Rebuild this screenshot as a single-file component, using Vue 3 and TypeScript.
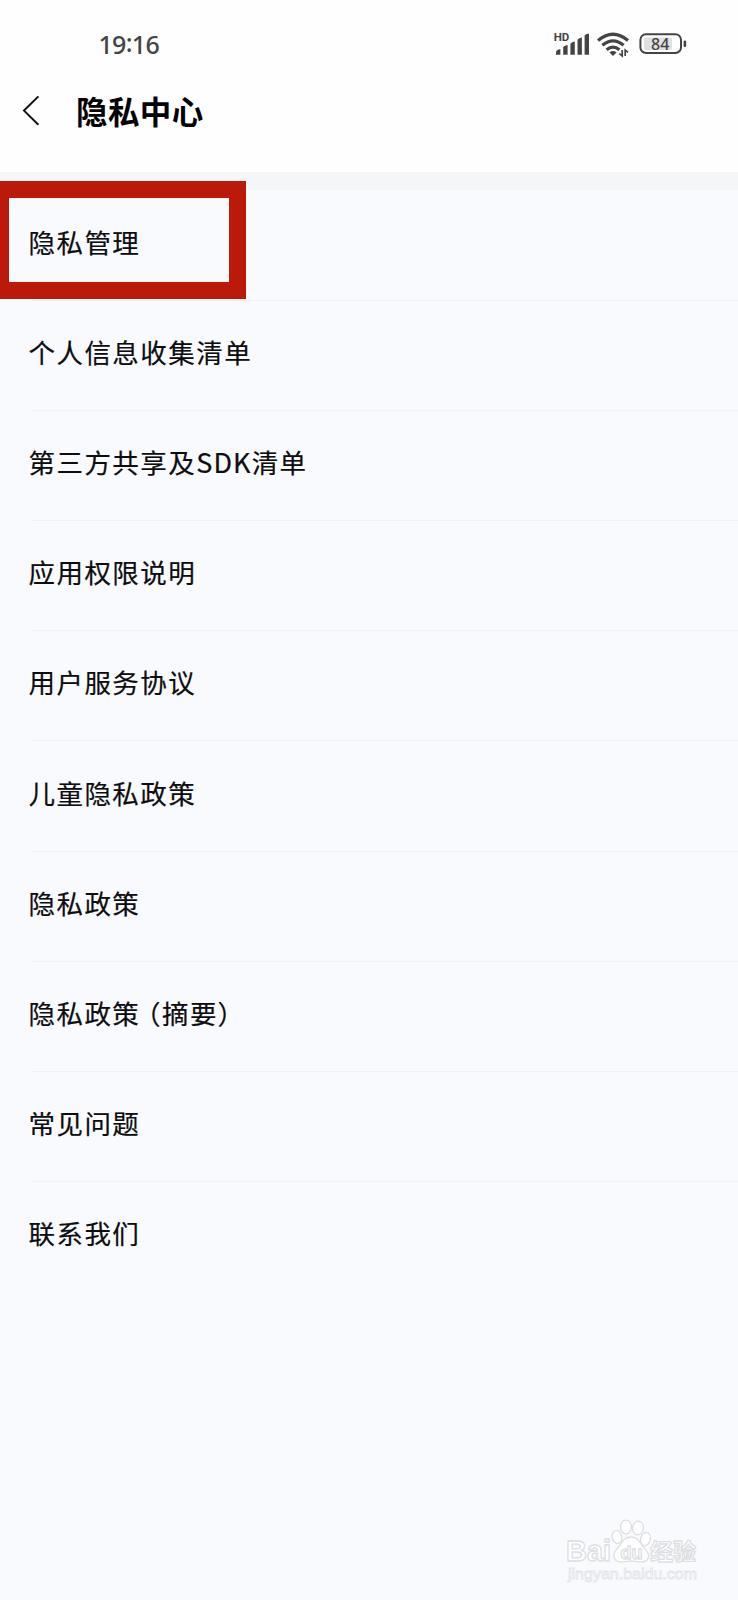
<script setup lang="ts">
interface Piece {
  text: string
  kind?: 'latin' | 'open' | 'close'
}

const rows: Piece[][] = [
  [{ text: '隐私管理' }],
  [{ text: '个人信息收集清单' }],
  [{ text: '第三方共享及' }, { text: 'SDK', kind: 'latin' }, { text: '清单' }],
  [{ text: '应用权限说明' }],
  [{ text: '用户服务协议' }],
  [{ text: '儿童隐私政策' }],
  [{ text: '隐私政策' }],
  [{ text: '隐私政策' }, { text: '（', kind: 'open' }, { text: '摘要' }, { text: '）', kind: 'close' }],
  [{ text: '常见问题' }],
  [{ text: '联系我们' }],
]
</script>

<template>
  <div class="screen">
    <header class="top">
      <div class="status">
        <span class="clock">19<span class="colon">:</span>16</span>
        <svg class="indicators" width="140" height="32" viewBox="0 0 140 32">
          <text x="-0.3" y="13.4" class="hd">HD</text>
          <g fill="#444">
            <path d="M2 26.8V24.5Q2 21.5 6.4 21V26.8Z" />
            <path d="M9.2 26.8V19.5Q9.2 18 13.6 17V26.8Z" />
            <path d="M16.4 26.8V16Q16.4 14.5 20.8 13.4V26.8Z" />
            <path d="M23.5 26.8V12Q23.5 10.5 27.9 9.4V26.8Z" />
            <path d="M30.6 26.8V8Q30.6 6 35 5.4V26.8Z" />
          </g>
          <g fill="none" stroke="#444" stroke-width="3.3">
            <path d="M44 12.5Q59 0 74 12.5" />
            <path d="M48.4 17.3Q59 8.4 69.6 17.3" />
            <path d="M52.6 21.8Q59 16.4 65.4 21.8" />
          </g>
          <path d="M55.4 24.4Q59 21.6 62.6 24.4L59 28Z" fill="#444" />
          <path d="M68.2 22V28L65.4 25.6M71.2 28V22L74 24.4" fill="none" stroke="#444" stroke-width="1.7" />
          <rect x="86.4" y="6.3" width="40.6" height="18.6" rx="5.5" fill="none" stroke="#444" stroke-width="2" />
          <rect x="90" y="9.6" width="28" height="12.4" rx="2" fill="#e0e0e0" />
          <rect x="129.6" y="12.4" width="2.6" height="6.6" rx="1.2" fill="#444" />
          <text x="106.2" y="21.8" text-anchor="middle" class="level">84</text>
        </svg>
      </div>
      <div class="bar">
        <svg class="back" width="20" height="34" viewBox="0 0 20 34">
          <path d="M17.4 2.4L3 16.6L17.4 30.8" fill="none" stroke="#111" stroke-width="2" />
        </svg>
        <h1>隐私中心</h1>
      </div>
    </header>
    <div class="gap"></div>
    <main class="list">
      <div v-for="(row, i) in rows" :key="i" class="row">
        <span class="label"><span v-for="(p, j) in row" :key="j" :class="p.kind">{{ p.text }}</span></span>
      </div>
    </main>
    <div class="highlight"></div>
    <svg class="mark" width="140" height="70" viewBox="0 0 140 70">
      <g fill="#fff" stroke="#dedfe3" stroke-width="1.3">
        <text x="0" y="43" class="brand" textLength="45" lengthAdjust="spacingAndGlyphs">Bai</text>
        <ellipse cx="51" cy="19" rx="4.8" ry="6.6" transform="rotate(-12 51 19)" />
        <ellipse cx="60" cy="9" rx="5.4" ry="6.8" />
        <ellipse cx="72" cy="10" rx="5.4" ry="6.8" transform="rotate(8 72 10)" />
        <ellipse cx="79.5" cy="21" rx="4.8" ry="6.6" transform="rotate(15 79.5 21)" />
        <path d="M65 19C57 19 56 26 51 31C45 37 48 44 56 44C61 44 62 43 65 43C68 43 71 44 75 44C83 44 85 37 79 31C74 26 73 19 65 19Z" />
        <text x="54.5" y="40.5" class="du">du</text>
        <text x="84" y="42" class="cn">经验</text>
      </g>
      <text x="2" y="60.5" class="site" textLength="129" lengthAdjust="spacingAndGlyphs">jingyan.baidu.com</text>
    </svg>
  </div>
</template>

<style>
body {
  margin: 0;
  background: #f9fafe;
}
</style>

<style scoped>
.screen {
  position: relative;
  width: 738px;
  height: 1600px;
  overflow: hidden;
  background: #f9fafe;
  color: #0d0d0f;
  font-family: "Noto Sans CJK SC", sans-serif;
}
.top {
  height: 172px;
  background: #fefefe;
}
.status {
  display: flex;
  justify-content: space-between;
  height: 76px;
  padding: 28px 44px 0 98.5px;
  box-sizing: border-box;
}
.clock {
  font-family: "Noto Sans", sans-serif;
  font-size: 25px;
  font-weight: 500;
  line-height: 33px;
  letter-spacing: -0.7px;
  color: #444;
}
.colon {
  position: relative;
  top: -2px;
}
.hd {
  font: 700 11.5px Roboto, sans-serif;
  fill: #444;
}
.level {
  font: 500 16px "Noto Sans", sans-serif;
  fill: #444;
}
.bar {
  display: flex;
  align-items: center;
  height: 69px;
  padding-left: 21px;
}
h1 {
  margin: -2px 0 0 35px;
  font-size: 31.5px;
  font-weight: 700;
  line-height: 46px;
  letter-spacing: 0.4px;
  color: #000;
}
.gap {
  height: 18px;
  background: #f4f6f8;
}
.row {
  display: flex;
  align-items: center;
  height: 110.1px;
  margin-left: 32px;
  box-sizing: border-box;
}
.row + .row {
  border-top: 1px solid #f1f2f5;
}
.label {
  margin: -6px 0 0 -3.5px;
  font-size: 26.5px;
  line-height: 40px;
  letter-spacing: 1.45px;
  white-space: nowrap;
  -webkit-text-stroke: 0.2px #0d0d0f;
}
.row + .row .label {
  margin-top: -7px;
}
.latin {
  font-size: 27px;
  letter-spacing: 1.1px;
}
.open,
.close {
  font-feature-settings: "halt";
}
.open {
  margin-left: 7px;
}
.close {
  margin-left: -0.5px;
}
.highlight {
  position: absolute;
  left: -8px;
  top: 181.4px;
  width: 254px;
  height: 118px;
  box-sizing: border-box;
  border: 17px solid #bc190b;
}
.mark {
  position: absolute;
  left: 566px;
  top: 1518px;
}
.brand {
  font: 700 29px "Liberation Sans", sans-serif;
}
.du {
  font: 700 18px "Liberation Sans", sans-serif;
}
.cn {
  font: 700 23px "Noto Sans CJK SC", sans-serif;
}
.site {
  font: 400 15px "Liberation Sans", sans-serif;
  fill: #fff;
  stroke: #e3e4e8;
  stroke-width: 0.8px;
}
</style>
